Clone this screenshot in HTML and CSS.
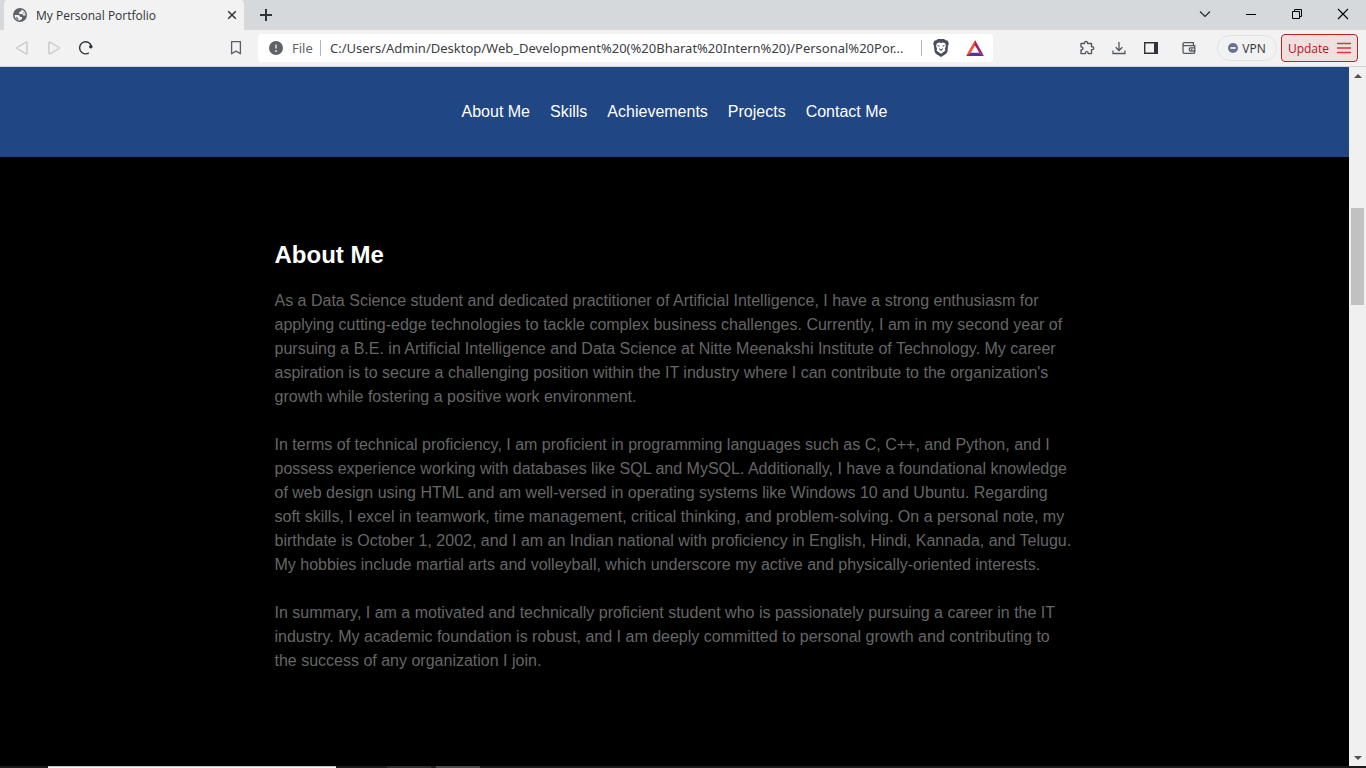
FILE: index.html
```html
<!DOCTYPE html>
<html lang="en">
<head>
<meta charset="utf-8">
<title>My Personal Portfolio</title>
<link rel="stylesheet" href="styles.css">
</head>
<body>
<div class="window">
  <div class="tabstrip">
    <div class="tab">
      <svg class="tab-icon" width="14" height="14" viewBox="0 0 14 14"><circle cx="7" cy="7" r="7" fill="#5f6368"/><path d="M1.500 7H5Q7 7.200 7.200 9H9V11L6.500 12.500Q2 12 1.500 7z" fill="#f2f2f2"/><path d="M8.500 1.500Q12.500 3 12.600 7.500H10.300L9.300 6H6.200V3.800L8.400 3.300z" fill="#f2f2f2"/><path d="M3 8.400 5.400 10.500V12L3.500 11zM10 3.500 11.600 5.400 10.800 6z" fill="#5f6368"/></svg>
      <span class="tab-title">My Personal Portfolio</span>
      <button class="tab-close" aria-label="Close tab"><svg width="10" height="10" viewBox="0 0 10 10"><path d="M1.2 1.2l7.6 7.6M8.8 1.2 1.2 8.8" stroke="#303438" stroke-width="1.5"/></svg></button>
    </div>
    <button class="new-tab" aria-label="New tab"><svg width="12" height="12" viewBox="0 0 12 12"><path d="M6 0v12M0 6h12" stroke="#303438" stroke-width="2"/></svg></button>
    <div class="window-controls">
      <button aria-label="Search tabs"><svg width="12" height="12" viewBox="0 0 12 12"><path d="M1 3.5l5 5 5-5" fill="none" stroke="#222" stroke-width="1.1"/></svg></button>
      <button aria-label="Minimize"><svg width="12" height="12" viewBox="0 0 12 12"><path d="M1 6.5h10" stroke="#000"/></svg></button>
      <button aria-label="Restore"><svg width="12" height="12" viewBox="0 0 12 12"><path d="M1.5 3.5h7v7h-7zM3.5 3.5v-2h7v7h-2" fill="none" stroke="#000"/></svg></button>
      <button aria-label="Close"><svg width="12" height="12" viewBox="0 0 12 12"><path d="M1 1l10 10M11 1 1 11" stroke="#000" stroke-width="1.1"/></svg></button>
    </div>
  </div>

  <div class="toolbar">
    <button class="tool" aria-label="Back"><svg width="14" height="16" viewBox="0 0 14 16"><path d="M12 2.8v10.4q0 1.2-1 .6L2.3 8.7q-1-.7 0-1.4L11 2.2q1-.6 1 .6z" fill="none" stroke="#c3c5c7" stroke-width="1.3"/></svg></button>
    <button class="tool" aria-label="Forward"><svg width="14" height="16" viewBox="0 0 14 16"><path d="M2 2.8v10.4q0 1.2 1 .6l8.7-5.1q1-.7 0-1.4L3 2.2q-1-.6-1 .6z" fill="none" stroke="#c3c5c7" stroke-width="1.3"/></svg></button>
    <button class="tool" aria-label="Reload"><svg width="16" height="16" viewBox="0 0 16 16"><path d="M10.800 12.900A6 6 0 1 1 13.400 6.300" fill="none" stroke="#303438" stroke-width="1.400"/><circle cx="12.800" cy="6.800" r="1.800" fill="#303438"/></svg></button>
    <button class="tool bookmark" aria-label="Bookmark"><svg width="12" height="16" viewBox="0 0 12 16"><path d="M1.6 1.6h8.8v12.2L6 11.1l-4.4 2.7z" fill="none" stroke="#5a5e66" stroke-width="1.3" stroke-linejoin="round"/></svg></button>
    <div class="address">
      <svg width="14" height="14" viewBox="0 0 14 14"><circle cx="7" cy="7" r="7" fill="#5f6368"/><path d="M7 3.5v4M7 9v2" stroke="#d8d9da" stroke-width="1.6"/></svg>
      <label class="scheme" for="url">File</label>
      <input class="url" id="url" type="text" value="C:/Users/Admin/Desktop/Web_Development%20(%20Bharat%20Intern%20)/Personal%20Por...">
      <button class="shield" aria-label="Shields"><svg width="16" height="18" viewBox="0 0 16 18"><path d="M3.200 1.200 5 0h6l1.800 1.200 2 .5 1 3-.8 2.200-.5 5.700Q14 14 12.800 15L8 18l-4.800-3Q2 14 1.500 12.600L1 6.900.2 4.700l1-3z" fill="#4a4d60"/><path d="M4 4.200 6 3.500 8 4 10 3.500l2 .7 1 2.600L12 9.500l.3 2.200L8 14.800 3.700 11.700 4 9.500 3 6.800z" fill="#fff"/><path d="M4.400 6.600 6.600 7.200M11.600 6.600 9.400 7.200M6 9.600 8 10.900 10 9.600M8 10.500v1.500" fill="none" stroke="#4a4d60" stroke-width="1"/></svg></button>
      <button class="rewards" aria-label="Rewards"><svg width="18" height="16" viewBox="0 0 18 16"><path d="M9 0v5.500L4.600 12.700 0 16z" fill="#ff4724"/><path d="M9 0l9 16-4.600-3.300L9 5.500z" fill="#9e1f63"/><path d="M0 16l4.600-3.300h8.800L18 16z" fill="#662d91"/></svg></button>
    </div>
    <button class="tool extensions" aria-label="Extensions"><svg width="16" height="16" viewBox="0 0 16 16"><path d="M2 3.500h3.500c-.6-2.800 3.600-2.800 3 0h4v3.300c3-.8 3 3.400 0 2.800v4H9.200c.4-2.600-3.200-2.600-2.800 0H2V10c2.600.2 2.600-3.300 0-3.100z" fill="none" stroke="#54585f" stroke-width="1.400" stroke-linejoin="round"/></svg></button>
    <button class="tool" aria-label="Downloads"><svg width="14" height="14" viewBox="0 0 14 14"><path d="M7 1v8.500M3.700 6.300 7 9.500l3.300-3.200M1 9.500v3h12v-3" fill="none" stroke="#54585f" stroke-width="1.300"/></svg></button>
    <button class="tool" aria-label="Side panel"><svg width="14" height="12" viewBox="0 0 14 12"><path d="M.7.700h12.600v10.600H.7z" fill="#f2f2f2" stroke="#303438" stroke-width="1.400"/><path d="M10 0h4v12h-4z" fill="#303438"/></svg></button>
    <button class="tool wallet" aria-label="Wallet"><svg width="14" height="12" viewBox="0 0 14 12"><path d="M1 2.500V10q0 1.300 1.300 1.300h9.200q1.300 0 1.300-1.300V3.600H2.200Q1 3.600 1 2.200 1 .7 2.400.7h9v2.900M12.800 5.800H8.500q-1.300 0-1.300 1.600t1.300 1.600h4.300" fill="none" stroke="#54585f" stroke-width="1.300"/><path d="M9 7.400h1.400" stroke="#54585f" stroke-width="1.300"/></svg></button>
    <button class="vpn"><svg width="10" height="10" viewBox="0 0 10 10"><circle cx="5" cy="5" r="5" fill="#6b7090"/><path d="M2.300 5h5.400" stroke="#fff" stroke-width="1.600"/></svg>VPN</button>
    <button class="update">Update<svg width="14" height="12" viewBox="0 0 14 12"><path d="M0 1.500h14M0 6h14M0 10.500h14" stroke="#d13a3a" stroke-width="1.300"/></svg></button>
  </div>

  <div class="viewport">
    <div class="page">
      <nav class="site-nav">
        <a href="#about">About Me</a>
        <a href="#skills">Skills</a>
        <a href="#achievements">Achievements</a>
        <a href="#projects">Projects</a>
        <a href="#contact">Contact Me</a>
      </nav>
      <section class="about" id="about">
        <h2>About Me</h2>
        <p>As a Data Science student and dedicated practitioner of Artificial Intelligence, I have a strong enthusiasm for applying cutting-edge technologies to tackle complex business challenges. Currently, I am in my second year of pursuing a B.E. in Artificial Intelligence and Data Science at Nitte Meenakshi Institute of Technology. My career aspiration is to secure a challenging position within the IT industry where I can contribute to the organization's growth while fostering a positive work environment.</p>
        <p>In terms of technical proficiency, I am proficient in programming languages such as C, C++, and Python, and I possess experience working with databases like SQL and MySQL. Additionally, I have a foundational knowledge of web design using HTML and am well-versed in operating systems like Windows 10 and Ubuntu. Regarding soft skills, I excel in teamwork, time management, critical thinking, and problem-solving. On a personal note, my birthdate is October 1, 2002, and I am an Indian national with proficiency in English, Hindi, Kannada, and Telugu. My hobbies include martial arts and volleyball, which underscore my active and physically-oriented interests.</p>
        <p>In summary, I am a motivated and technically proficient student who is passionately pursuing a career in the IT industry. My academic foundation is robust, and I am deeply committed to personal growth and contributing to the success of any organization I join.</p>
      </section>
    </div>
    <div class="scrollbar">
      <button aria-label="Scroll up"><svg width="8" height="4" viewBox="0 0 8 4"><path d="M4 0l4 4H0z" fill="#505050"/></svg></button>
      <div class="track"><div class="thumb"></div></div>
      <button aria-label="Scroll down"><svg width="8" height="4" viewBox="0 0 8 4"><path d="M4 4l4-4H0z" fill="#505050"/></svg></button>
    </div>
  </div>

  <div class="taskbar">
    <span class="task-search"></span>
    <span class="task-item"></span>
    <span class="task-item task-active"></span>
  </div>
</div>
</body>
</html>
```
FILE: styles.css
```css
* { box-sizing: border-box; }

body {
  margin: 0;
  font-family: "Liberation Sans", Arial, sans-serif;
}

button {
  display: flex;
  align-items: center;
  justify-content: center;
  padding: 0;
  border: 0;
  background: none;
  font: inherit;
}

svg { display: block; flex: none; }

.window {
  display: flex;
  flex-direction: column;
  height: 100vh;
  overflow: hidden;
}

/* Tab strip */
.tabstrip {
  display: flex;
  flex: none;
  height: 30px;
  padding-left: 4px;
  background: #d5d9dc;
}

.tab {
  display: flex;
  align-items: center;
  width: 240px;
  padding: 0 7px 0 9px;
  border-radius: 4px 4px 0 0;
  background: #f2f2f2;
}

.tab-title {
  flex: 1;
  margin-left: 9px;
  font: 12px "Open Sans", sans-serif;
  color: #303438;
  white-space: nowrap;
}

.new-tab { width: 44px; }

.window-controls {
  display: flex;
  margin-left: auto;
}

.window-controls button { width: 46px; height: 28px; }

/* Toolbar */
.toolbar {
  display: flex;
  flex: none;
  align-items: center;
  height: 37px;
  padding: 0 8px 0 6px;
  border-bottom: 1px solid #d2d4d6;
  background: #f2f2f2;
  font-family: "Open Sans", sans-serif;
}

.tool { flex: none; width: 32px; height: 28px; }
.bookmark { margin-left: 118px; }
.extensions { margin-left: 78px; }
.wallet { margin: 0 12px 0 6px; }

.address {
  display: flex;
  flex: 1;
  align-items: center;
  min-width: 0;
  height: 28px;
  margin-left: 6px;
  padding: 0 9px 0 11px;
  border-radius: 4px;
  background: #fff;
  font-family: "Noto Sans", sans-serif;
  font-size: 13px;
}

.scheme {
  width: 28px;
  margin-left: 9px;
  color: #5f6368;
}

.url {
  flex: 1;
  min-width: 0;
  height: 16px;
  padding: 0 0 0 9px;
  border: solid #b4b6b9;
  border-width: 0 1px;
  background: none;
  font: inherit;
  color: #3c4043;
}

.shield { margin: 0 17px 0 11px; }

.vpn {
  flex: none;
  width: 60px;
  height: 26px;
  gap: 4px;
  border: 1px solid #e0e1e3;
  border-radius: 13px;
  font-size: 12px;
  color: #303438;
}

.update {
  flex: none;
  width: 77px;
  height: 28px;
  margin-left: 4px;
  gap: 8px;
  border: 1px solid #c22020;
  border-radius: 4px;
  background: #efdfdf;
  font-size: 12px;
  color: #b8121b;
}

/* Web page */
.viewport {
  display: flex;
  flex: 1;
  min-height: 0;
}

.page {
  flex: 1;
  min-width: 0;
  overflow: hidden;
  background: #000;
  font-size: 16px;
  line-height: 24px;
}

.site-nav {
  display: flex;
  justify-content: center;
  gap: 20px;
  padding: 33px 0;
  background: #204683;
}

.site-nav a {
  color: #fff;
  text-decoration: none;
}

.about {
  max-width: 800px;
  margin: 0 auto;
  padding: 80px 0;
  color: #666;
}

.about h2 {
  margin: 0 0 16px;
  font-size: 24px;
  line-height: 36px;
  color: #fff;
}

.about p { margin: 0 0 24px; }
.about p:last-child { margin-bottom: 0; }

/* Scrollbar */
.scrollbar {
  display: flex;
  flex: none;
  flex-direction: column;
  width: 17px;
  background: #f0f0f0;
}

.scrollbar button { height: 17px; }

.track {
  flex: 1;
  padding: 124px 2px 0;
}

.thumb {
  height: 97px;
  background: #c1c1c1;
}

/* Visible edge of the desktop taskbar */
.taskbar {
  display: flex;
  flex: none;
  gap: 5px;
  height: 2px;
  padding-left: 48px;
  background: #1b1b1b;
}

.task-search {
  width: 288px;
  margin-right: 46px;
  border-top: 1px solid #c4c4c4;
  background: #f4f4f4;
}

.task-item { width: 44px; background: #303030; }
.task-active { background: #4a4a4a; }
```
